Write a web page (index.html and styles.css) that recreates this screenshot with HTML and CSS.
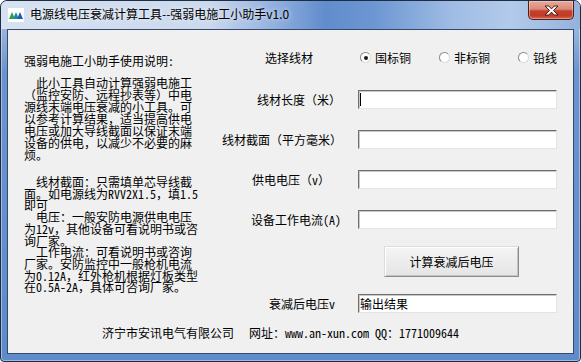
FILE: index.html
```html
<!DOCTYPE html>
<html lang="zh-CN">
<head>
  <meta charset="UTF-8">
  <title>电源线电压衰减计算工具</title>
  <link rel="stylesheet" href="styles.css">
</head>
<body>
  <div class="window">
    <!-- Title bar -->
    <div class="titlebar">
      <svg class="app-icon" width="16" height="16" viewBox="0 0 16 16">
        <rect x="0" y="1" width="16" height="14" fill="#fff"/>
        <path d="M1 12 L4 5 L7 12 Z" fill="#2f9e45"/>
        <path d="M5 12 L8 5 L11 12 Z" fill="#1f8aa8"/>
        <path d="M9 12 L12 5 L15 12 Z" fill="#2358b4"/>
      </svg>
      <span class="title">电源线电压衰减计算工具--强弱电施工小助手v1.0</span>
      <div class="close-btn">
        <svg width="15" height="11" viewBox="0 0 15 11">
          <path d="M1 1 H4.8 L7.5 3.9 L10.2 1 H14 L9.5 5.5 L14 10 H10.2 L7.5 7.1 L4.8 10 H1 L5.5 5.5 Z" fill="#fff" stroke="#4d1b12" stroke-width="1"/>
        </svg>
      </div>
    </div>

    <div class="client">
      <div class="main">
        <!-- Left: usage notes -->
        <div class="help">
          <div class="help-title">强弱电施工小助手使用说明:</div>
<p class="help-text">  此小工具自动计算强弱电施工
（监控安防、远程抄表等）中电
源线末端电压衰减的小工具。可
以参考计算结果，适当提高供电
电压或加大导线截面以保证末端
设备的供电，以减少不必要的麻
烦。</p>
<p class="help-text tight">  线材截面：只需填单芯导线截
面。如电源线为RVV2X1.5，填1.5
即可
  电压：一般安防电源供电电压
为12v，其他设备可看说明书或咨
询厂家。
  工作电流：可看说明书或咨询
厂家。安防监控中一般枪机电流
为0.12A，红外枪机根据灯板类型
在0.5A-2A，具体可咨询厂家。</p>
        </div>

        <!-- Right: calculator form -->
        <form class="calc">
          <div class="row row-material">
            <label class="lbl lbl-material">选择线材</label>
            <div class="radios">
              <div class="option"><span class="radio checked"></span>国标铜</div>
              <div class="option"><span class="radio"></span>非标铜</div>
              <div class="option"><span class="radio"></span>铅线</div>
            </div>
          </div>
          <div class="row row-first">
            <label class="lbl">线材长度（米）</label>
            <div class="field caret"><input class="textbox" type="text" name="length"></div>
          </div>
          <div class="row">
            <label class="lbl">线材截面（平方毫米）</label>
            <div class="field"><input class="textbox" type="text" name="section"></div>
          </div>
          <div class="row">
            <label class="lbl lbl-volt">供电电压（v）</label>
            <div class="field"><input class="textbox" type="text" name="voltage"></div>
          </div>
          <div class="row">
            <label class="lbl">设备工作电流(A)</label>
            <div class="field"><input class="textbox" type="text" name="current"></div>
          </div>
          <div class="row row-btn">
            <button type="button" class="calc-btn">计算衰减后电压</button>
          </div>
          <div class="row row-out">
            <label class="lbl lbl-out">衰减后电压v</label>
            <div class="field"><input class="textbox" type="text" name="result" value="输出结果"></div>
          </div>
        </form>
      </div>

      <div class="footer">
        <span>济宁市安讯电气有限公司</span>
        <span>网址：www.an-xun.com QQ：1771009644</span>
      </div>
    </div>
  </div>
</body>
</html>
```

FILE: styles.css
```css
* {
  box-sizing: border-box;
}

body {
  margin: 0;
  background: #fff;
  font-family: "Noto Sans Mono CJK SC", "Noto Sans CJK SC", sans-serif;
  font-size: 12px;
  color: #000;
}

.window {
  width: 581px;
  height: 362px;
  border: 1px solid #1e2c44;
  border-radius: 7px 7px 4px 4px;
  background: linear-gradient(180deg, #b8cbe7 0, #6b94cf 70px, #5f8bcb 100%);
  box-shadow: inset 0 0 0 1px rgba(255, 255, 255, 0.4);
  overflow: hidden;
}

.titlebar {
  height: 28px;
  display: flex;
  align-items: flex-start;
  padding-left: 7px;
  background: linear-gradient(90deg, #d6e2f1 0%, #cbd9ed 36%, #93b1df 47%, #608dcc 56%, #6b96d1 64%, #9fbce4 78%, #b3cbea 88%, #94b2dc 100%);
  border-radius: 6px 6px 0 0;
}

.app-icon {
  margin-top: 6px;
  flex: none;
}

.title {
  margin-left: 6px;
  line-height: 26px;
  font-family: "Noto Sans CJK SC", sans-serif;
  text-shadow: 0 0 5px rgba(255, 255, 255, 0.9);
  white-space: nowrap;
}

.close-btn {
  margin-left: auto;
  margin-right: 6px;
  width: 46px;
  height: 19px;
  display: flex;
  align-items: center;
  justify-content: center;
  border: 1px solid #4a2018;
  border-top: none;
  border-radius: 0 0 5px 5px;
  background: linear-gradient(180deg, #e9a99a 0%, #d98a79 45%, #c4412c 55%, #c13b27 80%, #d4624c 100%);
  box-shadow: inset 0 0 0 1px rgba(255, 220, 210, 0.45);
}

.client {
  margin: 0 6px;
  height: 325px;
  border: 1px solid #34496b;
  background: #f0f0f0;
  display: flex;
  flex-direction: column;
}

.main {
  display: flex;
  height: 283px;
}

/* left notes */
.help {
  width: 214px;
  flex: none;
  padding: 25px 0 0 16px;
}

.help-title {
  line-height: 12px;
  white-space: nowrap;
}

.help-text {
  margin: 10px 0 0;
  line-height: 12px;
  white-space: pre;
}

.help-text.tight {
  margin-top: 15px;
  line-height: 11.7px;
}

/* right form */
.calc {
  display: flex;
  flex-direction: column;
  margin: 0;
}

.row {
  display: flex;
  align-items: center;
  height: 19px;
  margin-top: 21px;
}

.row-material {
  margin-top: 18px;
}

.row-first {
  margin-top: 23px;
}

.row-btn {
  height: 31px;
  margin-top: 17px;
}

.row-out {
  margin-top: 17px;
}

.lbl {
  width: 120px;
  flex: none;
  text-align: right;
  padding-right: 1px;
  line-height: 12px;
  white-space: nowrap;
}

.lbl-material {
  padding-right: 29px;
}

.lbl-volt {
  padding-right: 12px;
}

.lbl-out {
  padding-right: 7px;
}

.radios {
  display: flex;
  gap: 28px;
  margin-left: 18px;
}

.option {
  display: flex;
  align-items: center;
  gap: 4px;
  line-height: 12px;
}

.radio {
  width: 11px;
  height: 11px;
  border-radius: 50%;
  border: 1px solid;
  border-color: #8a8a8a #dadada #dadada #8a8a8a;
  background: #fff;
  display: flex;
  align-items: center;
  justify-content: center;
}

.radio.checked::after {
  content: "";
  width: 4px;
  height: 4px;
  border-radius: 50%;
  background: #1a1a1a;
}

.field {
  position: relative;
  margin-left: 16px;
  display: flex;
}

.field.caret::after {
  content: "";
  position: absolute;
  left: 2px;
  top: 3px;
  width: 1px;
  height: 13px;
  background: #000;
}

.textbox {
  width: 199px;
  height: 19px;
  margin: 0;
  padding: 0 1px;
  border: 1px solid;
  border-color: #6e6e6e #e3e3e3 #e3e3e3 #6e6e6e;
  box-shadow: inset 1px 1px 0 #c9c9c9;
  background: #fff;
  font: inherit;
  color: #000;
  outline: none;
}

.calc-btn {
  margin-left: 162px;
  width: 135px;
  height: 31px;
  padding: 0;
  border: 1px solid;
  border-color: #dcdcdc #8c8c8c #8c8c8c #dcdcdc;
  box-shadow: inset 1px 1px 0 #fff, inset -1px -1px 0 #c4c4c4;
  background: linear-gradient(180deg, #f4f4f4, #e5e5e5);
  font: inherit;
  color: #000;
}

.footer {
  display: flex;
  gap: 15px;
  margin-top: 14px;
  padding-left: 94px;
  line-height: 12px;
  white-space: nowrap;
}
```
